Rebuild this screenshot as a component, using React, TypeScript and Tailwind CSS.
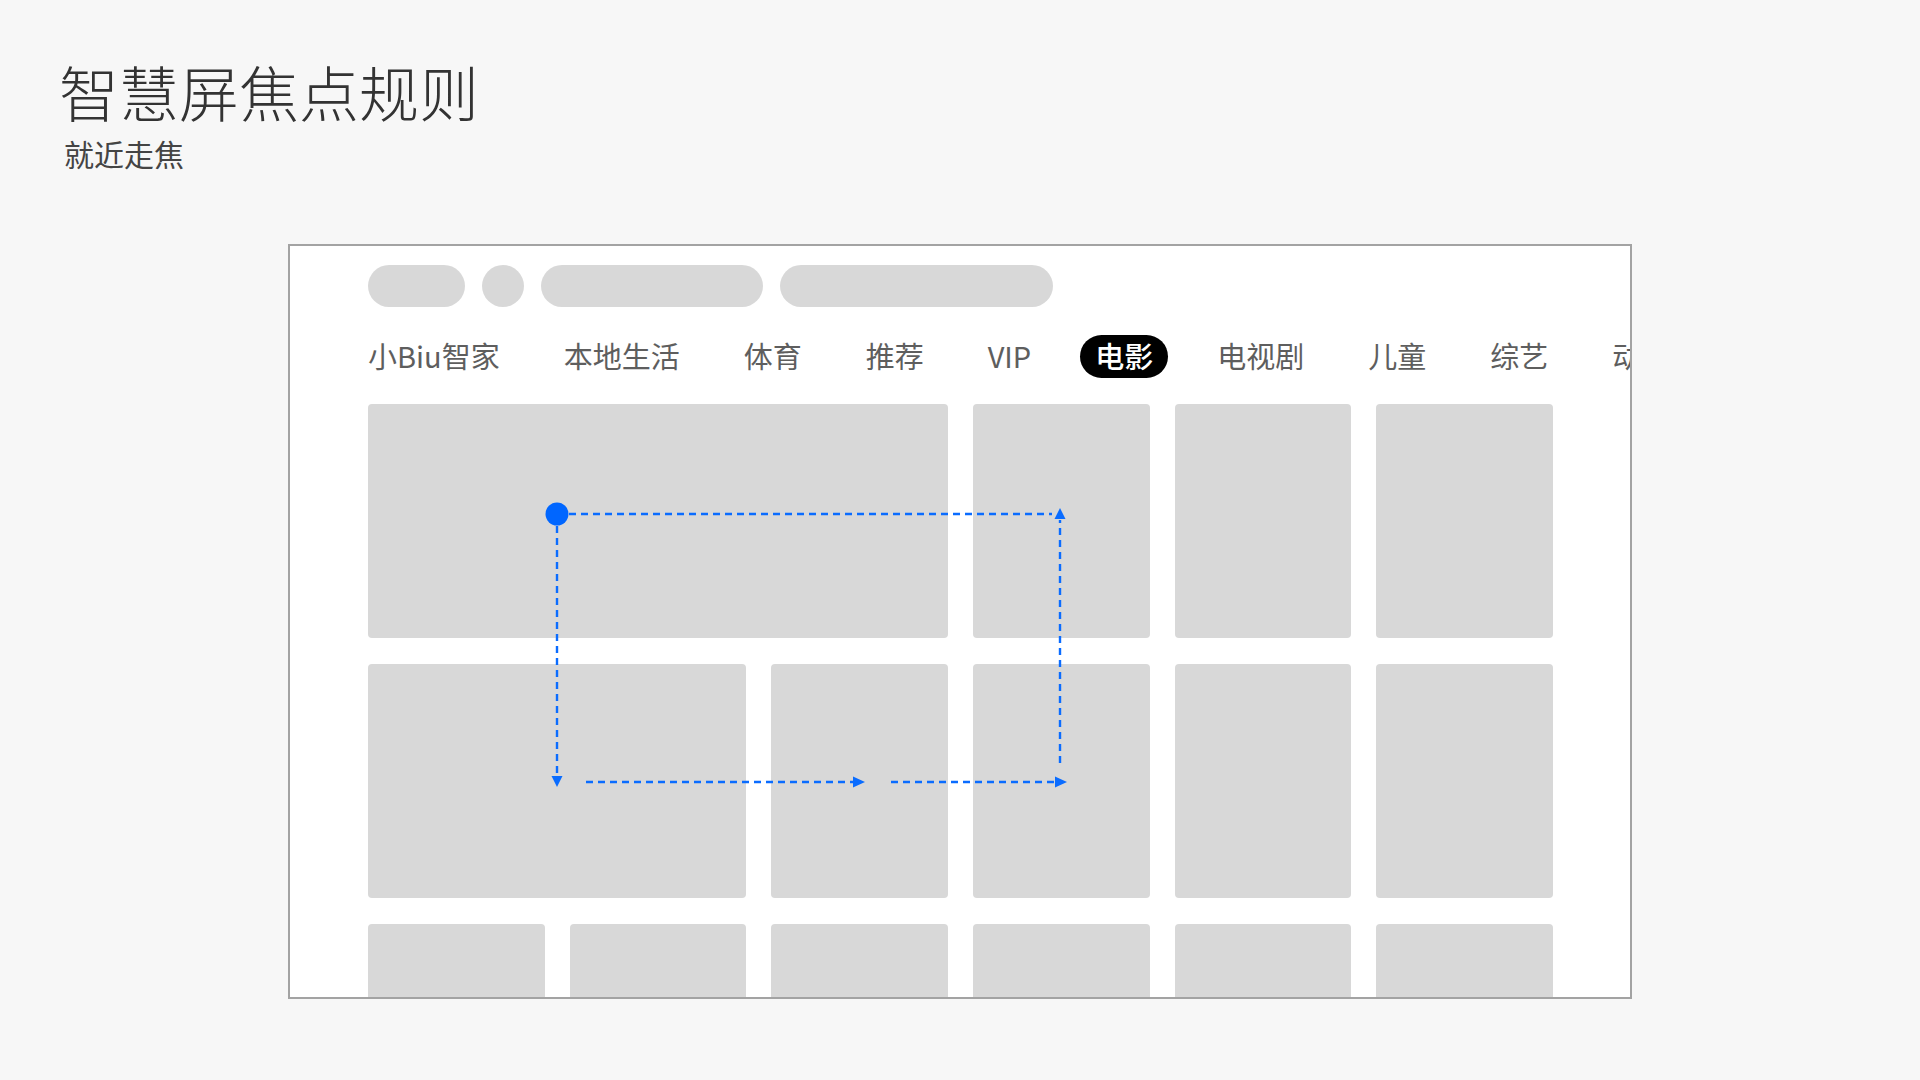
import React from 'react';

const tabs = ['小Biu智家', '本地生活', '体育', '推荐', 'VIP', '电影', '电视剧', '儿童', '综艺', '动漫'];
const activeTab = '电影';

// top status pills, widths in px
const pills = ['w-[97px]', 'w-[42px]', 'w-[222px]', 'w-[273px]'];

// grid tiles: col span per tile, row by row
const tiles = [
  'col-span-3', 'col-span-1', 'col-span-1', 'col-span-1',
  'col-span-2', 'col-span-1', 'col-span-1', 'col-span-1', 'col-span-1',
  'col-span-1', 'col-span-1', 'col-span-1', 'col-span-1', 'col-span-1', 'col-span-1',
];

function FocusPath() {
  const blue = '#0a6cff';
  return (
    <svg className="absolute left-0 top-0 pointer-events-none" width="1340" height="751" viewBox="0 0 1340 751">
      <g stroke={blue} strokeWidth="2.4" strokeDasharray="7 5" fill="none">
        <line x1="279" y1="268" x2="762" y2="268" />
        <line x1="770" y1="517" x2="770" y2="274" />
        <line x1="267" y1="280" x2="267" y2="530" />
        <line x1="296" y1="536" x2="563" y2="536" />
        <line x1="601" y1="536" x2="765" y2="536" />
      </g>
      <g fill={blue}>
        <circle cx="267" cy="268" r="11.5" fill="#0066ff" />
        <polygon points="770,262 764.5,273 775.5,273" />
        <polygon points="267,541 261.5,530 272.5,530" />
        <polygon points="575,536 563,530.5 563,541.5" />
        <polygon points="777,536 765,530.5 765,541.5" />
      </g>
    </svg>
  );
}

export default function App() {
  return (
    <div className="w-[1920px] h-[1080px] bg-[#f7f7f7] font-['Noto_Sans_CJK_SC','Noto_Sans',sans-serif] overflow-hidden">
      <header className="pl-[59px] pt-[61px]">
        <h1 className="text-[60px] leading-none font-light text-[#333333]">智慧屏焦点规则</h1>
        <p className="mt-[17px] ml-[5px] text-[30px] leading-none text-[#444444]">就近走焦</p>
      </header>

      <div className="relative ml-[288px] mt-[76px] w-[1344px] h-[755px] border-2 border-[#a3a3a3] bg-white overflow-hidden">
        <div className="flex flex-col pl-[78px] pt-[19px]">
          <div className="flex gap-[17px] h-[42px]">
            {pills.map((w, i) => (
              <div key={i} className={`${w} h-[42px] rounded-full bg-[#d8d8d8]`} />
            ))}
          </div>

          <nav className="flex gap-[34px] mt-[28px] -ml-[15px] whitespace-nowrap">
            {tabs.map((t) => (
              <span
                key={t}
                className={`shrink-0 h-[43px] px-[15px] pb-[3px] flex items-center rounded-full text-[29px] leading-none ${
                  t === activeTab ? 'bg-black text-white font-medium' : 'text-[#5e5e5e]'
                }`}
              >
                {t}
              </span>
            ))}
          </nav>

          <div className="grid grid-cols-6 w-[1185px] gap-x-[25px] gap-y-[26px] mt-[26px]">
            {tiles.map((span, i) => (
              <div key={i} className={`${span} h-[234px] rounded-[4px] bg-[#d8d8d8]`} />
            ))}
          </div>
        </div>
        <FocusPath />
      </div>
    </div>
  );
}
